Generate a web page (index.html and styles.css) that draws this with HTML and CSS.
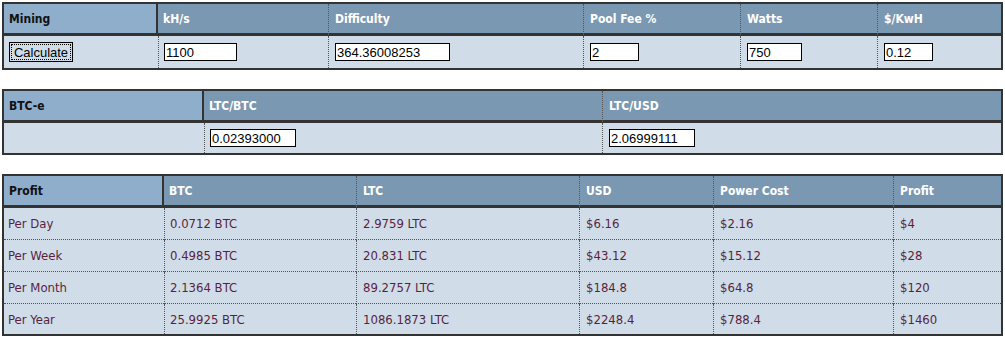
FILE: index.html
```html
<!DOCTYPE html>
<html lang="en">
<head>
    <meta charset="UTF-8">
    <title>Mining Calculator</title>
    <link rel="stylesheet" href="styles.css">
</head>
<body>
    <table class="grid mining">
        <tr>
            <th class="lead">Mining</th>
            <th>kH/s</th>
            <th>Difficulty</th>
            <th>Pool Fee %</th>
            <th>Watts</th>
            <th>$/KwH</th>
        </tr>
        <tr>
            <td><button type="button" class="calc">Calculate</button></td>
            <td><input type="text" class="w-hash" value="1100"></td>
            <td><input type="text" class="w-diff" value="364.36008253"></td>
            <td><input type="text" class="w-small" value="2"></td>
            <td><input type="text" class="w-watts" value="750"></td>
            <td><input type="text" class="w-small" value="0.12"></td>
        </tr>
    </table>

    <table class="grid exchange">
        <tr>
            <th class="lead">BTC-e</th>
            <th>LTC/BTC</th>
            <th>LTC/USD</th>
        </tr>
        <tr>
            <td></td>
            <td><input type="text" class="w-rate" value="0.02393000"></td>
            <td><input type="text" class="w-rate" value="2.06999111"></td>
        </tr>
    </table>

    <table class="grid profit">
        <tr>
            <th class="lead">Profit</th>
            <th>BTC</th>
            <th>LTC</th>
            <th>USD</th>
            <th>Power Cost</th>
            <th>Profit</th>
        </tr>
        <tr>
            <td>Per Day</td>
            <td>0.0712 BTC</td>
            <td>2.9759 LTC</td>
            <td>$6.16</td>
            <td>$2.16</td>
            <td>$4</td>
        </tr>
        <tr>
            <td>Per Week</td>
            <td>0.4985 BTC</td>
            <td>20.831 LTC</td>
            <td>$43.12</td>
            <td>$15.12</td>
            <td>$28</td>
        </tr>
        <tr>
            <td>Per Month</td>
            <td>2.1364 BTC</td>
            <td>89.2757 LTC</td>
            <td>$184.8</td>
            <td>$64.8</td>
            <td>$120</td>
        </tr>
        <tr>
            <td>Per Year</td>
            <td>25.9925 BTC</td>
            <td>1086.1873 LTC</td>
            <td>$2248.4</td>
            <td>$788.4</td>
            <td>$1460</td>
        </tr>
    </table>
</body>
</html>
```

FILE: styles.css
```css
* {
    box-sizing: border-box;
}

body {
    margin: 2px;
    background: #fff;
    font-family: "DejaVu Sans Condensed", "DejaVu Sans", sans-serif;
    font-size: 12px;
}

.grid {
    width: 1001px;
    border-collapse: separate;
    border-spacing: 0;
    border: 2px solid #333;
    table-layout: fixed;
    margin-bottom: 19px;
}

.grid:last-child {
    margin-bottom: 0;
}

.grid th {
    height: 32px;
    padding: 0 6px;
    text-align: left;
    font-weight: bold;
    color: #fff;
    background: #7b98b2;
    border-bottom: 3px solid #333;
    border-left: 1px dotted #555;
}

.grid th.lead {
    padding-left: 5px;
    color: #111;
    background: #8eaecc;
    border-left: none;
    border-right: 2px solid #333;
}

.grid th.lead + th {
    padding-left: 5px;
    border-left: none;
}

.grid td {
    height: 32px;
    padding: 0 6px;
    font-size: 13px;
    color: #5a1f3c;
    background: #d0dde9;
    border-left: 1px dotted #555;
}

.grid td:first-child {
    padding-left: 4px;
    border-left: none;
}

.grid td:nth-child(2) {
    padding-left: 5px;
}

.profit tr:not(:last-child) td {
    border-bottom: 1px dotted #555;
}

.profit tr:last-child td {
    height: 30px;
}

.exchange td {
    height: 30px;
}

input {
    font-family: "Liberation Sans", Arial, sans-serif;
    font-size: 13px;
    height: 18px;
    padding: 0 1px;
    border: 1px solid #000;
    background: #fff;
    color: #000;
}

.w-hash { width: 73px; }
.w-diff { width: 115px; }
.w-small { width: 49px; }
.w-watts { width: 55px; }
.w-rate { width: 86px; }

.calc {
    font-family: "Liberation Sans", Arial, sans-serif;
    font-size: 13px;
    height: 20px;
    width: 64px;
    padding: 0;
    margin-left: 1px;
    color: #000;
    background: #d0dde9;
    border: 1px solid #000;
    outline: 1px dotted #000;
    outline-offset: -3px;
}

/* column widths */
.mining th:nth-child(1) { width: 154px; }
.mining th:nth-child(2) { width: 170px; }
.mining th:nth-child(3) { width: 255px; }
.mining th:nth-child(4) { width: 157px; }
.mining th:nth-child(5) { width: 137px; }

.exchange th:nth-child(1) { width: 200px; }
.exchange th:nth-child(2) { width: 398px; }

.profit th:nth-child(1) { width: 160px; }
.profit th:nth-child(2) { width: 192px; }
.profit th:nth-child(3) { width: 223px; }
.profit th:nth-child(4) { width: 134px; }
.profit th:nth-child(5) { width: 180px; }
```
